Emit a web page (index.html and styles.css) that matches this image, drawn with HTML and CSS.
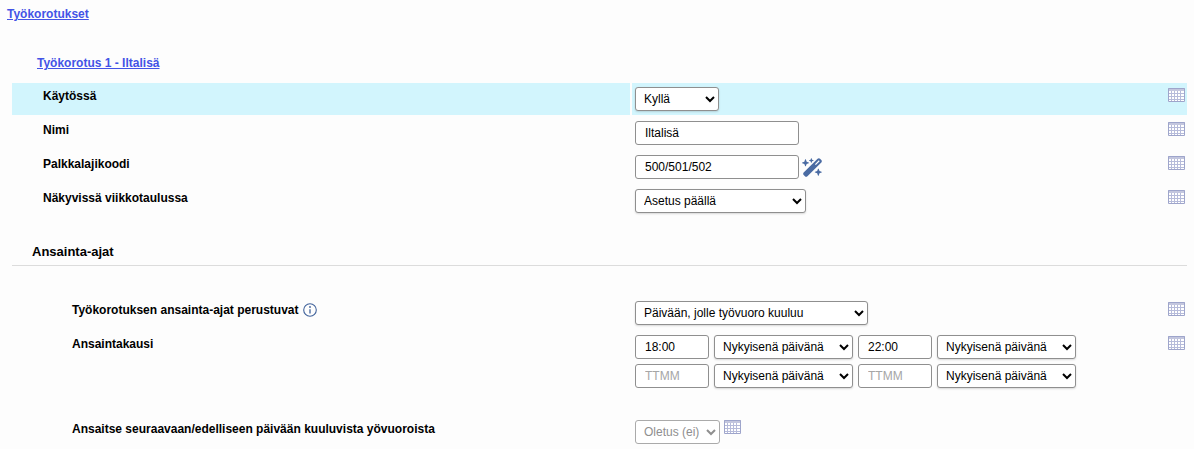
FILE: index.html
```html
<!DOCTYPE html>
<html lang="fi">
<head>
<meta charset="utf-8">
<title>Työkorotukset</title>
<link rel="stylesheet" href="styles.css">
</head>
<body>
<svg class="defs" width="0" height="0">
  <symbol id="cal" viewBox="0 0 17 14">
    <rect x="0" y="0" width="17" height="14" fill="#fff"/>
    <rect x="0" y="0" width="17" height="3" fill="#c3c6de"/>
    <path d="M.5 5.5h16M.5 8.5h16M.5 11.5h16M3.5 3v11M6.5 3v11M9.5 3v11M12.5 3v11" fill="none" stroke="#b6bbda" stroke-width="1"/>
    <path d="M.5 .5h16v13H.5z" fill="none" stroke="#9ea5cb" stroke-width="1"/>
  </symbol>
</svg>
<a class="top-link" href="#">Työkorotukset</a>
<main class="form">
  <a class="sub-link" href="#">Työkorotus 1 - Iltalisä</a>
  <div class="row active">
    <div class="label">Käytössä</div>
    <div class="value"><select class="s-84"><option>Kyllä</option></select></div>
    <svg class="cal"><use href="#cal"/></svg>
  </div>
  <div class="row">
    <div class="label">Nimi</div>
    <div class="value"><input class="i-164" type="text" value="Iltalisä"></div>
    <svg class="cal"><use href="#cal"/></svg>
  </div>
  <div class="row">
    <div class="label">Palkkalajikoodi</div>
    <div class="value">
      <input class="i-164" type="text" value="500/501/502">
      <svg class="wand" viewBox="0 0 576 512"><path fill="#4a6ba3" d="M234.7 42.7L197 56.8c-3 1.1-5 4-5 7.2s2 6.1 5 7.2l37.7 14.1L248.8 123c1.1 3 4 5 7.2 5s6.1-2 7.2-5l14.1-37.7L315 71.2c3-1.1 5-4 5-7.2s-2-6.1-5-7.2L277.3 42.7 263.2 5c-1.1-3-4-5-7.2-5s-6.1 2-7.2 5L234.7 42.7zM46.1 395.4c-18.7 18.7-18.7 49.1 0 67.9l34.6 34.6c18.7 18.7 49.1 18.7 67.9 0L529.9 116.5c18.7-18.7 18.7-49.1 0-67.9L495.3 14.1c-18.7-18.7-49.1-18.7-67.9 0L46.1 395.4zM484.6 82.6l-105 105-23.3-23.3 105-105 23.3 23.3zM7.5 117.2C3 118.9 0 123.2 0 128s3 9.1 7.5 10.8L64 160l21.2 56.5c1.7 4.5 6 7.5 10.8 7.5s9.1-3 10.8-7.5L128 160l56.5-21.2c4.5-1.7 7.5-6 7.5-10.8s-3-9.1-7.5-10.8L128 96 106.8 39.5C105.1 35 100.8 32 96 32s-9.1 3-10.8 7.5L64 96 7.5 117.2zm352 256c-4.5 1.7-7.5 6-7.5 10.8s3 9.1 7.5 10.8L416 416l21.2 56.5c1.7 4.5 6 7.5 10.8 7.5s9.1-3 10.8-7.5L480 416l56.5-21.2c4.5-1.7 7.5-6 7.5-10.8s-3-9.1-7.5-10.8L480 352l-21.2-56.5c-1.7-4.5-6-7.5-10.8-7.5s-9.1 3-10.8 7.5L416 352l-56.5 21.2z"/></svg>
    </div>
    <svg class="cal"><use href="#cal"/></svg>
  </div>
  <div class="row">
    <div class="label">Näkyvissä viikkotaulussa</div>
    <div class="value"><select class="s-171"><option>Asetus päällä</option></select></div>
    <svg class="cal"><use href="#cal"/></svg>
  </div>

  <h2 class="section">Ansainta-ajat</h2>

  <div class="row deep first">
    <div class="label">Työkorotuksen ansainta-ajat perustuvat
      <svg class="info" viewBox="0 0 14 14"><circle cx="7" cy="7" r="6.3" fill="none" stroke="#40629b" stroke-width="1.1"/><path d="M7 6.2v4.2" stroke="#40629b" stroke-width="1.3"/><circle cx="7" cy="4" r=".9" fill="#40629b"/></svg>
    </div>
    <div class="value"><select class="s-233"><option>Päivään, jolle työvuoro kuuluu</option></select></div>
    <svg class="cal"><use href="#cal"/></svg>
  </div>
  <div class="row deep">
    <div class="label">Ansaintakausi</div>
    <div class="value stack">
      <div class="times">
        <input class="i-74" type="text" value="18:00">
        <select class="s-139"><option>Nykyisenä päivänä</option></select>
        <input class="i-74" type="text" value="22:00">
        <select class="s-139"><option>Nykyisenä päivänä</option></select>
      </div>
      <div class="times">
        <input class="i-74" type="text" placeholder="TTMM">
        <select class="s-139"><option>Nykyisenä päivänä</option></select>
        <input class="i-74" type="text" placeholder="TTMM">
        <select class="s-139"><option>Nykyisenä päivänä</option></select>
      </div>
    </div>
    <svg class="cal"><use href="#cal"/></svg>
  </div>
  <div class="row deep last">
    <div class="label">Ansaitse seuraavaan/edelliseen päivään kuuluvista yövuoroista</div>
    <div class="value inline"><select class="s-85" disabled><option>Oletus (ei)</option></select><svg class="cal near"><use href="#cal"/></svg></div>
  </div>
</main>
</body>
</html>
```
FILE: styles.css
```css
html, body { margin: 0; padding: 0; }
body {
  background: #fdfdfd;
  color: #000;
  font-family: "Liberation Sans", Arial, sans-serif;
  font-size: 12px;
  height: 449px;
  overflow: hidden;
}
.defs { position: absolute; }
a { color: #4353e6; font-weight: 700; }
.top-link { display: block; width: max-content; margin: 7px 0 0 7px; line-height: 14px; }
.form { margin: 0 7px 0 12px; padding-top: 35px; }
.sub-link { display: block; width: max-content; margin-left: 25px; line-height: 14px; height: 14px; margin-bottom: 13px; }
.row {
  display: grid;
  grid-template-columns: 619px 533px 17px;
  column-gap: 2px;
  min-height: 32px;
  margin-bottom: 2px;
  box-sizing: border-box;
}
.row.active {
  background: linear-gradient(to right, #d2f5fd 618px, #fdfdfd 618px, #fdfdfd 620px, #d2f5fd 620px);
}
.label {
  font-weight: 700;
  padding: 6px 0 0 31px;
  line-height: 14px;
}
.deep .label { padding-left: 60px; }
.value { padding: 4px 0 4px 2px; display: flex; align-items: center; gap: 3px; }
.stack { display: block; }
.times { display: flex; gap: 5px; margin-bottom: 5px; }
.times:last-child { margin-bottom: 0; }
.cal { width: 17px; height: 14px; margin: 5px 0 0 0; display: block; }
.near { margin: -10px 0 0 1px; }
.inline { align-items: center; }
.wand { width: 21px; height: 19px; }
.info { width: 14px; height: 14px; vertical-align: -3px; margin-left: 1px; }
.section {
  margin: 27px 0 0;
  padding: 0 0 6px 20px;
  font-size: 13px;
  line-height: 15px;
  font-weight: 700;
  border-bottom: 1px solid #dcdcdc;
}
.row.first { margin-top: 31px; }
.row.last { margin-top: 24px; }
input, select {
  box-sizing: border-box;
  height: 24px;
  font: 12px "Liberation Sans", Arial, sans-serif;
  color: #000;
  background-color: #fff;
  border: 1px solid #8f8f8f;
  border-radius: 3px;
  margin: 0;
}
input { padding: 0 9px; }
input::placeholder { color: #a6a6a6; }
select { padding: 0 4px; box-shadow: 0 1px 2px rgba(0,0,0,.15); }
select:disabled { color: #8f8f8f; opacity: 1; box-shadow: none; border-color: #aaa; }
.i-164 { width: 164px; }
.i-74 { width: 74px; }
.s-84 { width: 84px; }
.s-85 { width: 85px; }
.s-139 { width: 139px; }
.s-171 { width: 171px; }
.s-233 { width: 233px; }
```
